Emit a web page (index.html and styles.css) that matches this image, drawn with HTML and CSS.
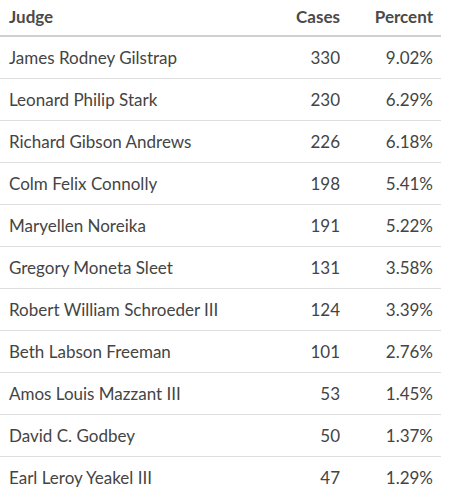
FILE: index.html
```html
<!DOCTYPE html>
<html>
<head>
<meta charset="utf-8">
<link rel="stylesheet" href="styles.css">
</head>
<body>
<table class="judges">
  <thead>
    <tr><th class="name">Judge</th><th class="num cases">Cases</th><th class="num pct">Percent</th></tr>
  </thead>
  <tbody>
    <tr><td class="name">James Rodney Gilstrap</td><td class="num cases">330</td><td class="num pct">9.02%</td></tr>
    <tr><td class="name">Leonard Philip Stark</td><td class="num cases">230</td><td class="num pct">6.29%</td></tr>
    <tr><td class="name">Richard Gibson Andrews</td><td class="num cases">226</td><td class="num pct">6.18%</td></tr>
    <tr><td class="name">Colm Felix Connolly</td><td class="num cases">198</td><td class="num pct">5.41%</td></tr>
    <tr><td class="name">Maryellen Noreika</td><td class="num cases">191</td><td class="num pct">5.22%</td></tr>
    <tr><td class="name">Gregory Moneta Sleet</td><td class="num cases">131</td><td class="num pct">3.58%</td></tr>
    <tr><td class="name">Robert William Schroeder III</td><td class="num cases">124</td><td class="num pct">3.39%</td></tr>
    <tr><td class="name">Beth Labson Freeman</td><td class="num cases">101</td><td class="num pct">2.76%</td></tr>
    <tr><td class="name">Amos Louis Mazzant III</td><td class="num cases">53</td><td class="num pct">1.45%</td></tr>
    <tr><td class="name">David C. Godbey</td><td class="num cases">50</td><td class="num pct">1.37%</td></tr>
    <tr><td class="name">Earl Leroy Yeakel III</td><td class="num cases">47</td><td class="num pct">1.29%</td></tr>
  </tbody>
</table>
</body>
</html>
```

FILE: styles.css
```css
html, body {
  margin: 0;
  padding: 0;
  background: #ffffff;
}
body {
  font-family: Lato, "Open Sans", "Liberation Sans", sans-serif;
  font-size: 17px;
  color: #444444;
}
.judges {
  width: 441px;
  border-collapse: collapse;
}
.judges th {
  height: 32px;
  padding: 0 8px 3px 9px;
  font-size: 17px;
  font-weight: 700;
  color: #4a4a4a;
  border-bottom: 2px solid #cfcfcf;
  vertical-align: middle;
}
.judges td {
  height: 40px;
  padding: 0 8px 1px 9px;
  border-bottom: 1px solid #dedede;
  vertical-align: middle;
}
.judges .name {
  text-align: left;
}
.judges .num {
  text-align: right;
}
.judges .cases {
  width: 80px;
}
.judges .pct {
  width: 76px;
}
```
